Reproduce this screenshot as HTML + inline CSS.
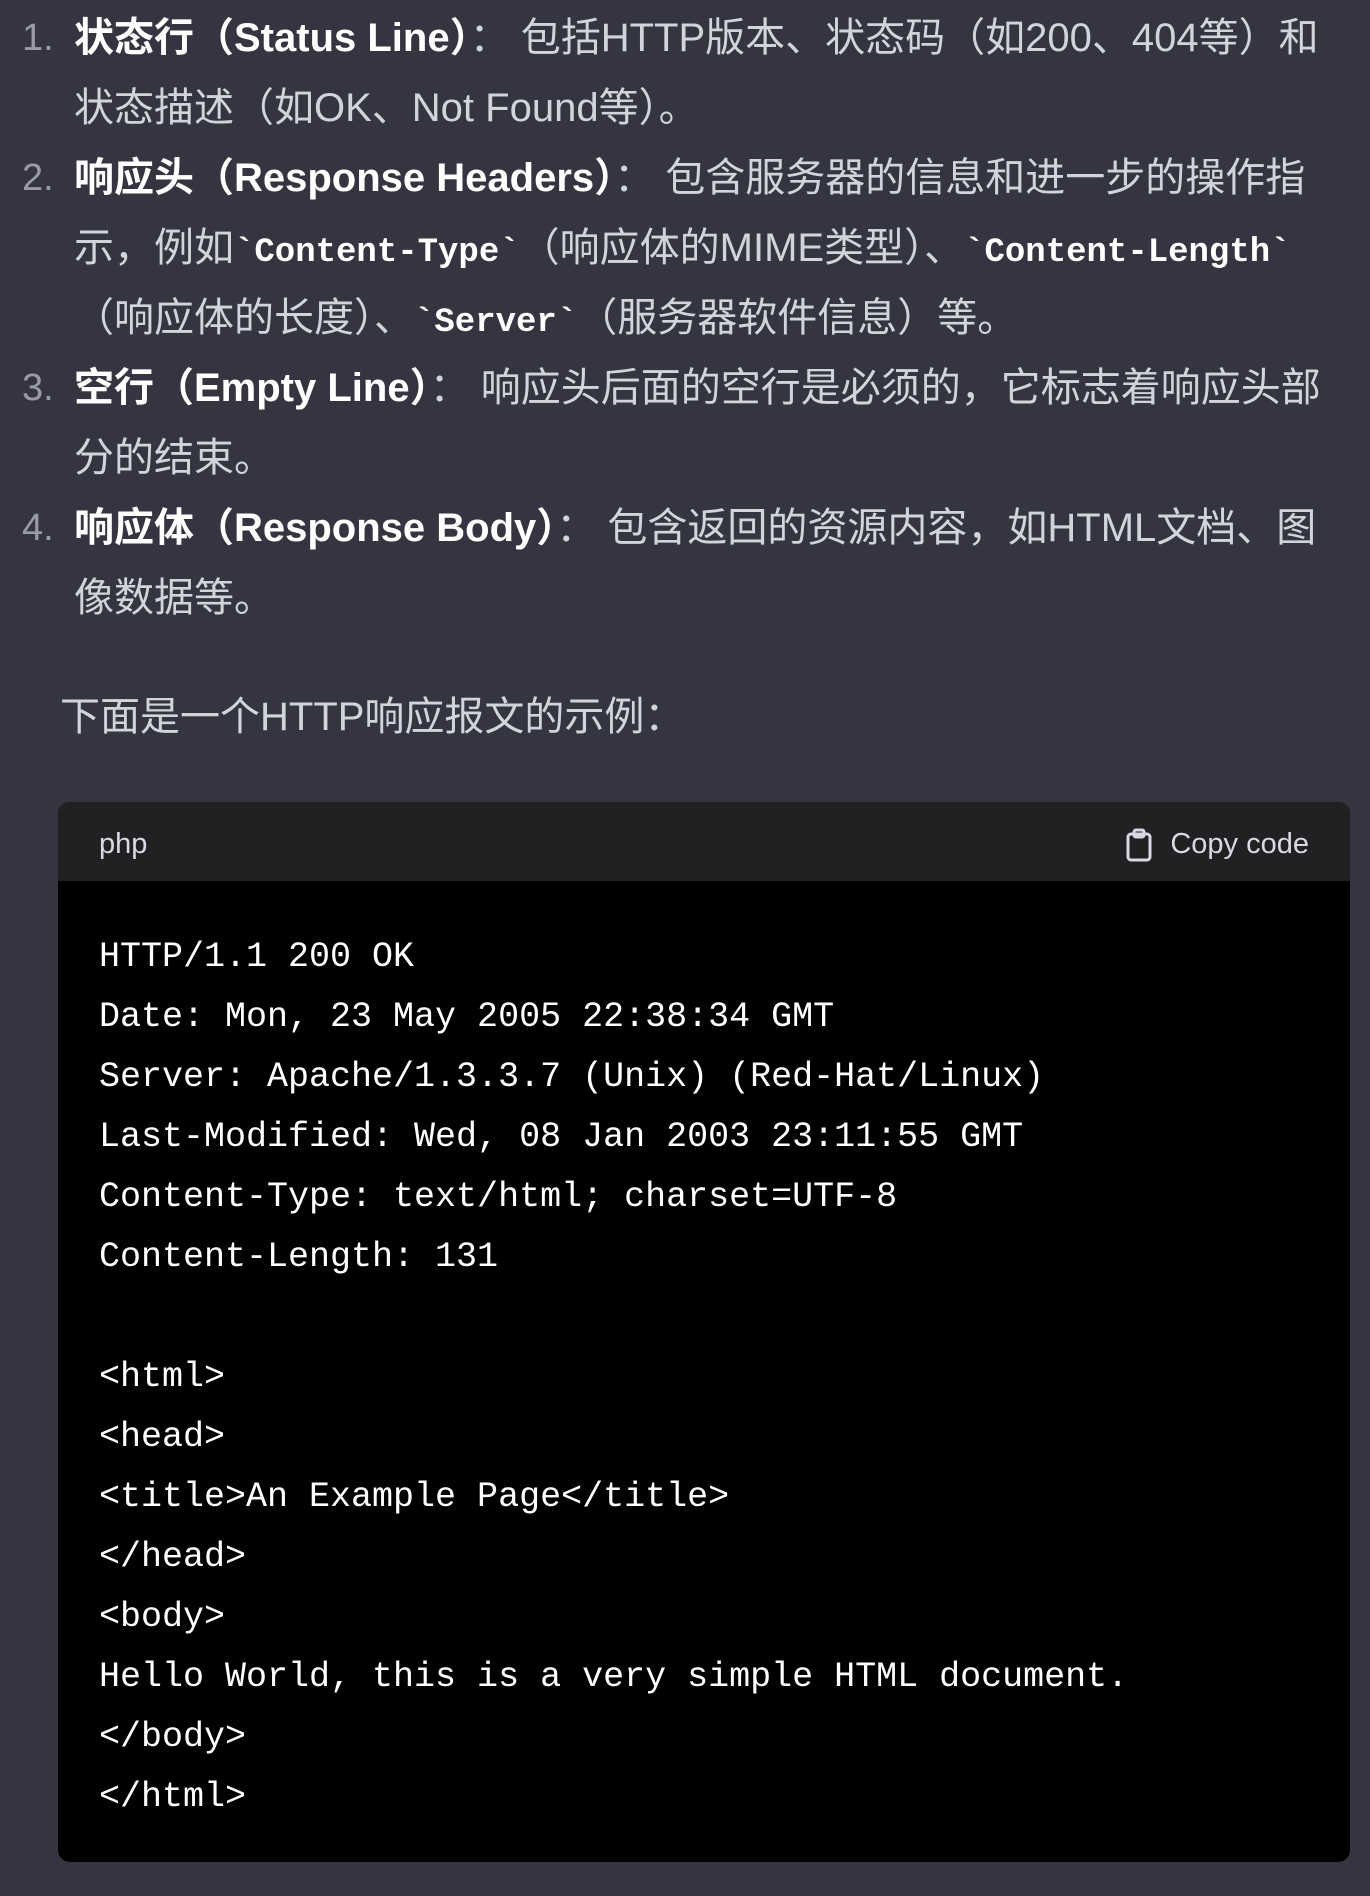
<!DOCTYPE html>
<html><head><meta charset="utf-8"><style>
html,body{margin:0;padding:0;background:#343541;width:1370px;height:1896px;overflow:hidden}
body{font-family:"Liberation Sans","Noto Sans CJK SC",sans-serif;color:#d1d5db;font-size:40px}
.l{position:absolute;white-space:nowrap;line-height:70px;height:70px}
.n{position:absolute;left:22px;color:#9a9ba6;line-height:70px;white-space:nowrap;font-size:38px}
b{color:#fff;font-weight:bold}
code{font-family:"Liberation Mono",monospace;font-weight:bold;color:#fff;font-size:34px}
.cb{position:absolute;left:58px;top:802px;width:1292px;height:1060px;background:#000;border-radius:12px;overflow:hidden}
.hd{height:79px;background:#202123;position:relative;font-size:29px;color:#d9d9e3}
.pre{font-family:"Liberation Mono",monospace;font-size:35px;color:#fff;position:absolute;left:41px;top:125px;line-height:60px;white-space:pre;letter-spacing:0px}
</style></head><body>
<div class="n" style="top:3px">1.</div>
<div class="l" style="left:74px;top:3px"><b>状态行（Status Line）</b>： 包括HTTP版本、状态码（如200、404等）和</div>
<div class="l" style="left:74px;top:73px">状态描述（如OK、Not Found等）。</div>
<div class="n" style="top:143px">2.</div>
<div class="l" style="left:74px;top:143px"><b>响应头（Response Headers）</b>： 包含服务器的信息和进一步的操作指</div>
<div class="l" style="left:74px;top:213px">示，例如<code>`Content-Type`</code>（响应体的MIME类型）、<code>`Content-Length`</code></div>
<div class="l" style="left:74px;top:283px">（响应体的长度）、<code>`Server`</code>（服务器软件信息）等。</div>
<div class="n" style="top:353px">3.</div>
<div class="l" style="left:74px;top:353px"><b>空行（Empty Line）</b>： 响应头后面的空行是必须的，它标志着响应头部</div>
<div class="l" style="left:74px;top:423px">分的结束。</div>
<div class="n" style="top:493px">4.</div>
<div class="l" style="left:74px;top:493px"><b>响应体（Response Body）</b>： 包含返回的资源内容，如HTML文档、图</div>
<div class="l" style="left:74px;top:563px">像数据等。</div>
<div class="l" style="left:60px;top:682px">下面是一个HTTP响应报文的示例：</div>
<div class="cb">
<div class="hd">
<span style="position:absolute;left:41px;top:26px">php</span>
<svg style="position:absolute;left:1066px;top:26px" width="30" height="34" viewBox="0 0 30 34" fill="none" stroke="#d9d9e3" stroke-width="3" stroke-linejoin="round"><rect x="4" y="6" width="22" height="26" rx="3"/><rect x="10" y="2" width="10" height="7" rx="2"/></svg>
<span style="position:absolute;right:41px;top:26px">Copy code</span>
</div>
<div class="pre">HTTP/1.1 200 OK
Date: Mon, 23 May 2005 22:38:34 GMT
Server: Apache/1.3.3.7 (Unix) (Red-Hat/Linux)
Last-Modified: Wed, 08 Jan 2003 23:11:55 GMT
Content-Type: text/html; charset=UTF-8
Content-Length: 131

&lt;html&gt;
&lt;head&gt;
&lt;title&gt;An Example Page&lt;/title&gt;
&lt;/head&gt;
&lt;body&gt;
Hello World, this is a very simple HTML document.
&lt;/body&gt;
&lt;/html&gt;</div>
</div>
</body></html>
